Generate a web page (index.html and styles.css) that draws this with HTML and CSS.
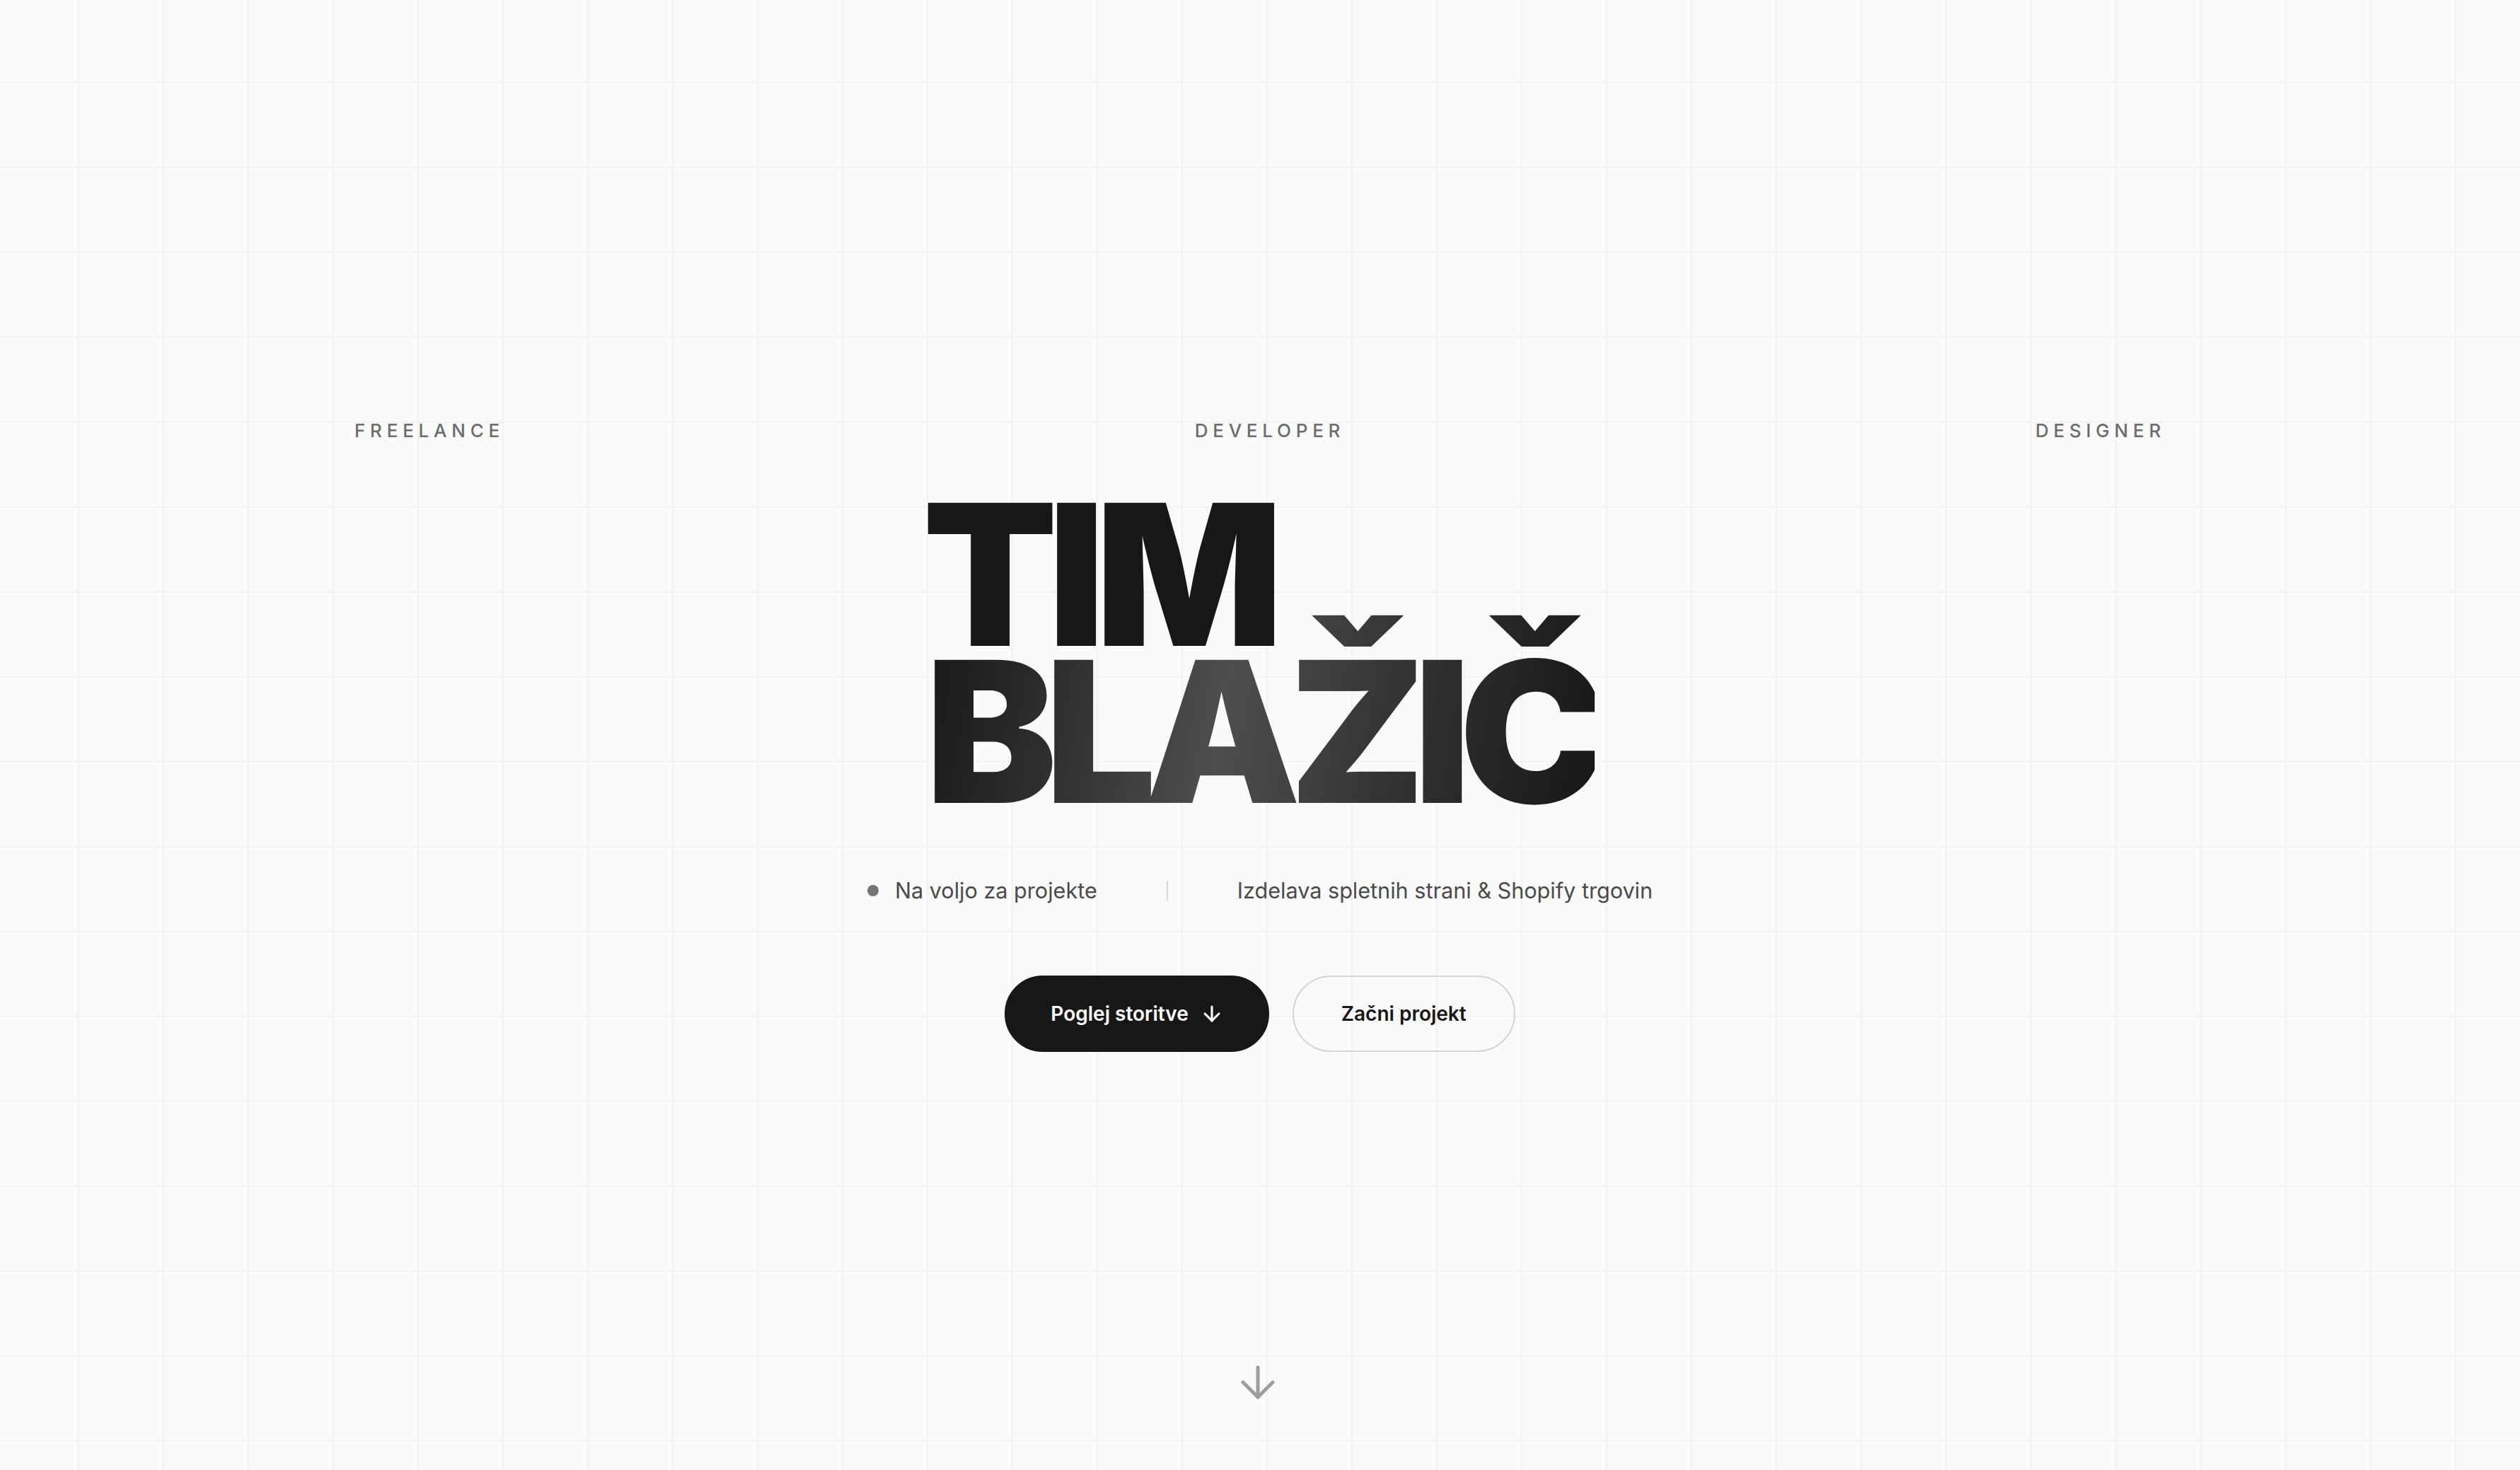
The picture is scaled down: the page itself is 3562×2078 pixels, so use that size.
FILE: index.html
```html
<!DOCTYPE html>
<html lang="sl">
<head>
<meta charset="utf-8">
<title>Tim Blažič — Freelance Developer &amp; Designer</title>
<link rel="stylesheet" href="styles.css">
</head>
<body>
<main class="hero">
  <div class="roles">
    <span class="role">FREELANCE</span>
    <span class="role">DEVELOPER</span>
    <span class="role">DESIGNER</span>
  </div>
  <h1 class="name">
    <span class="name-line name-solid">TIM</span>
    <span class="name-line name-gradient">BLAŽIČ</span>
  </h1>
  <div class="meta">
    <span class="status"><span class="status-dot"></span>Na voljo za projekte</span>
    <span class="meta-sep"></span>
    <span class="meta-text">Izdelava spletnih strani &amp; Shopify trgovin</span>
  </div>
  <div class="actions">
    <a class="btn btn-primary" href="#storitve">Poglej storitve
      <svg class="btn-icon" viewBox="0 0 24 24" fill="none" stroke="currentColor" stroke-width="2.2" stroke-linecap="round" stroke-linejoin="round"><path d="M12 5v14"/><path d="m19 12-7 7-7-7"/></svg>
    </a>
    <a class="btn btn-outline" href="#kontakt">Začni projekt</a>
  </div>
  <a class="scroll-cue" href="#storitve" aria-label="Scroll">
    <svg viewBox="0 0 24 24" fill="none" stroke="currentColor" stroke-width="1.7" stroke-linecap="round" stroke-linejoin="round"><path d="M12 5v14"/><path d="m19 12-7 7-7-7"/></svg>
  </a>
</main>
</body>
</html>
```
FILE: styles.css
```css
* { box-sizing: border-box; }

html, body {
  margin: 0;
  padding: 0;
}

body {
  font-family: Inter, "Liberation Sans", sans-serif;
  color: #171717;
  background-color: #fafafa;
  background-image:
    linear-gradient(to right, #f2f2f2 2px, transparent 2px),
    linear-gradient(to bottom, #f2f2f2 2px, transparent 2px);
  background-size: 120px 120px;
  background-position: 110px 116px;
}

.hero {
  position: relative;
  min-height: 100vh;
  display: flex;
  flex-direction: column;
  align-items: center;
  justify-content: center;
  padding: 0;
}

.roles {
  width: 2560px;
  display: flex;
  justify-content: space-between;
  font-size: 26px;
  line-height: 36px;
  font-weight: 500;
  letter-spacing: 0.26em;
  color: #6b6d6b;
}

.name {
  margin: 74px 0 0;
  display: flex;
  flex-direction: column;
  align-items: flex-start;
  font-size: 278px;
  line-height: 0.8;
  font-weight: 900;
  letter-spacing: -0.06em;
  font-variation-settings: "opsz" 32;
}

.name-line { display: block; }

.name-solid {
  color: #171717;
  letter-spacing: -0.05em;
  margin-left: -4px;
}

.name-gradient {
  padding-top: 90px;
  margin-top: -90px;
  background-image: linear-gradient(100deg, #171717 0%, #333333 25%, #4e4e4e 45%, #333333 70%, #171717 100%);
  -webkit-background-clip: text;
  background-clip: text;
  color: transparent;
}

.meta {
  margin-top: 90px;
  display: flex;
  align-items: center;
  gap: 98px;
  font-size: 30.6px;
  line-height: 48px;
  color: #4a4a4a;
}

.status {
  display: flex;
  align-items: center;
  gap: 23px;
}

.status-dot {
  width: 16px;
  height: 16px;
  border-radius: 50%;
  background: #737573;
}

.meta-sep {
  width: 2px;
  height: 28px;
  background: #d4d4d4;
}

.actions {
  margin-top: 96px;
  display: flex;
  gap: 33px;
}

.btn {
  height: 108px;
  border-radius: 999px;
  display: inline-flex;
  align-items: center;
  font-size: 28px;
  font-weight: 600;
  text-decoration: none;
}

.btn-primary {
  padding: 0 62px 0 63px;
  gap: 16px;
  background: #171717;
  color: #ffffff;
  border: 2px solid #171717;
}

.btn-outline {
  padding: 0 67px;
  background: transparent;
  color: #171717;
  border: 2px solid #d4d4d4;
}

.btn-icon {
  width: 34px;
  height: 34px;
}

.scroll-cue {
  position: absolute;
  left: 50%;
  bottom: 88px;
  width: 72px;
  height: 72px;
  margin-left: -39px;
  color: #9e9e9e;
}

.scroll-cue svg {
  width: 72px;
  height: 72px;
  display: block;
}
```
